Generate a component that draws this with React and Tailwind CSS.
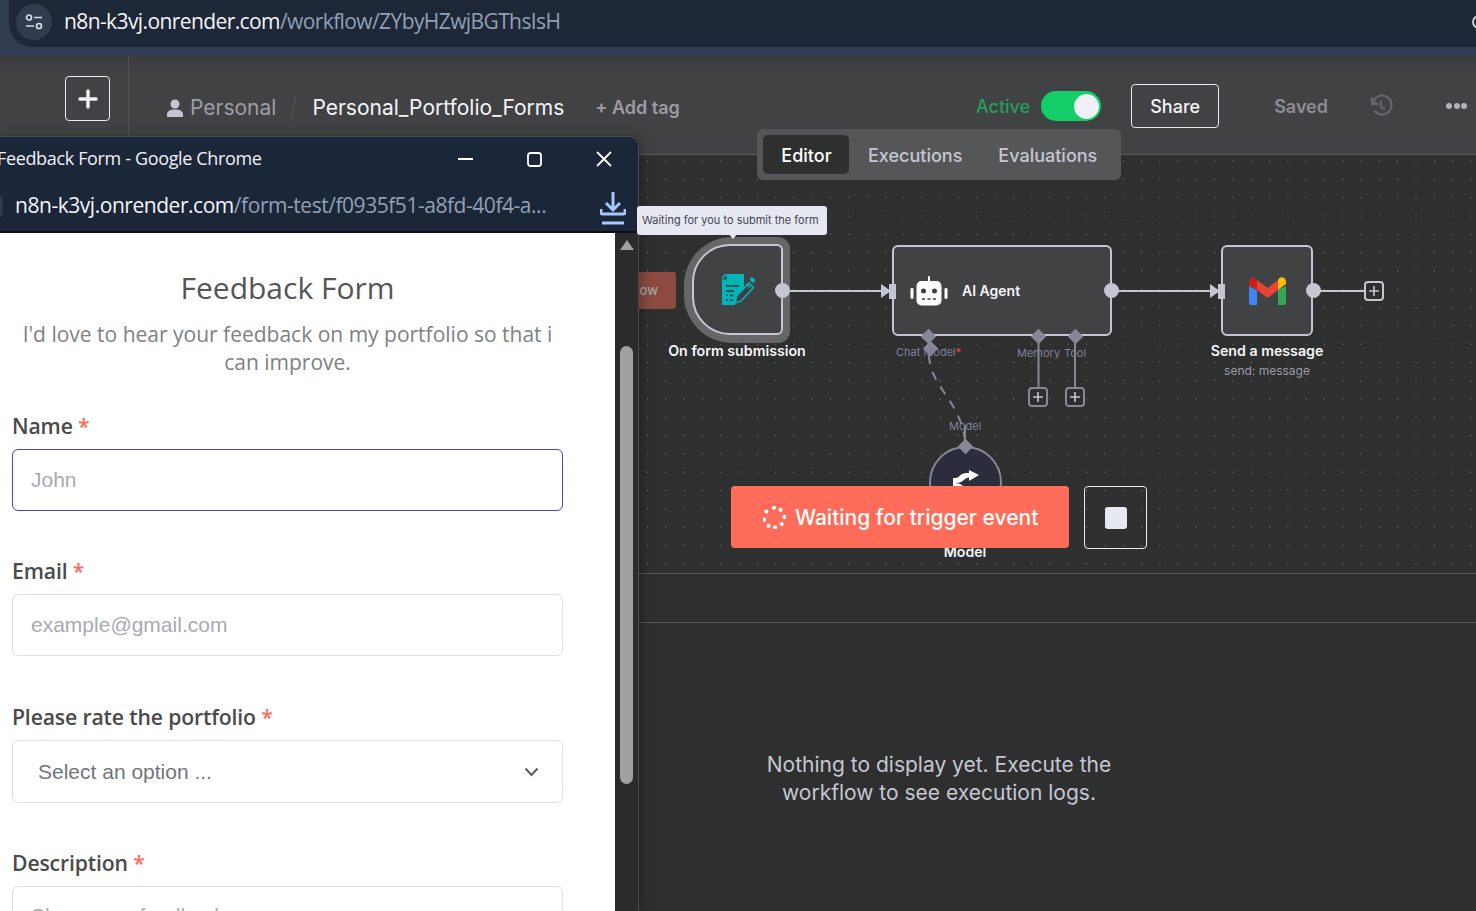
import React from "react";

const inter = "font-['Inter',sans-serif]";

function FormIcon() {
  return (
    <svg width="34" height="32" viewBox="0 0 34 32">
      <path d="M4 0h19v16l-8 9-1 6H1V3z" fill="#00b5b8" />
      <path d="M1 5.500l4.500-4.500v4.500z" fill="#3e3f41" />
      <path d="M5 12h13M5 17h8M5 21.500h2M9 21.500h3M5 26h2M9 26h3" stroke="#35383a" strokeWidth="1.6" />
      <path d="M14 29l1.500-7L28 9l4.500 4.500L20 27z" fill="#3e3f41" stroke="#00b5b8" strokeWidth="1.7" strokeLinejoin="round" />
      <path d="M29.500 5.500l1.500-1.500 2.500 2.500-1.500 1.500zM25.500 10l3.500 3.500" stroke="#00b5b8" strokeWidth="1.6" fill="#00b5b8" />
    </svg>
  );
}

function RobotIcon() {
  return (
    <svg width="38" height="30" viewBox="0 0 38 30">
      <rect x="18" y="0" width="2" height="6" rx="1" fill="#fff" />
      <rect x="6.500" y="5" width="25" height="24.500" rx="5" fill="#fff" />
      <rect x="0.500" y="12" width="3" height="11" rx="1.400" fill="#fff" />
      <rect x="34.500" y="12" width="3" height="11" rx="1.400" fill="#fff" />
      <circle cx="13.500" cy="15" r="2.500" fill="#3e3f41" />
      <circle cx="24.500" cy="15" r="2.500" fill="#3e3f41" />
      <path d="M12 23h3M17.500 23h3M23 23h3" stroke="#3e3f41" strokeWidth="1.6" />
    </svg>
  );
}

function GmailIcon() {
  return (
    <svg width="37" height="28" viewBox="0 0 37 28">
      <path d="M0 9v16.500A2.500 2.500 0 0 0 2.500 28H8V13z" fill="#4285f4" />
      <path d="M29 13v15h5.500a2.500 2.500 0 0 0 2.500-2.500V9z" fill="#34a853" />
      <path d="M29 3v10l8-6V4.500C37 1 33-1 30.500 1z" fill="#fbbc04" />
      <path d="M8 13V3l10.500 8L29 3v10l-10.500 8z" fill="#ea4335" />
      <path d="M0 4.500V9l8 4V3L6.500 1.500C4-1 0 1 0 4.500z" fill="#c5221f" />
    </svg>
  );
}

function Plus({ className }) {
  return (
    <div className={`absolute w-[20px] h-[20px] rounded-[4px] border-2 border-[#868898] flex items-center justify-center bg-[#2e2f2f] ${className}`}>
      <svg width="12" height="12" viewBox="0 0 12 12"><path d="M6 1v10M1 6h10" stroke="#c4c7d2" strokeWidth="1.6" /></svg>
    </div>
  );
}

function Diamond({ className }) {
  return <div className={`absolute w-[11px] h-[11px] rotate-45 bg-[#868898] ${className}`} />;
}

function Label({ children, className }) {
  return <div className={`text-[21.2px] leading-[28px] text-[#4a4a4a] font-semibold tracking-[-0.15px] ${className}`}>{children} <span className="text-[#ff6d5a]">*</span></div>;
}

function Spinner() {
  const pts = [[10,1.500],[16,3.500],[19.500,10],[17,16.500],[11,19.500],[5,18],[1,12.500],[3,5]];
  return (
    <svg width="23" height="23" viewBox="0 0 21 21">
      {pts.map(([x, y], i) => <circle key={i} cx={x} cy={y} r="1.900" fill="#fff" />)}
    </svg>
  );
}

export default function App() {
  return (
    <div className={`relative w-[1476px] h-[911px] overflow-hidden flex flex-col bg-[#2e2f2f] ${inter}`}>
      {/* Browser URL bar */}
      <div className="h-[56px] bg-[#313c50] shrink-0 pl-[9px] relative overflow-hidden">
        <div className="h-[47px] rounded-bl-[24px] bg-[#1e2738] flex items-center pl-[7px] gap-[12px]">
          <div className="w-[36px] h-[36px] rounded-full bg-[#323c4e] flex items-center justify-center -mt-[4px]">
            <svg width="22" height="20" viewBox="0 0 22 20" fill="none" stroke="#d5dbe6" strokeWidth="1.7">
              <circle cx="6" cy="5.500" r="2.500" /><path d="M11 5.500h8M3 14h8" /><circle cx="16" cy="14" r="2.500" />
            </svg>
          </div>
          <div className="font-['Open_Sans',sans-serif] text-[21px] tracking-[-0.6px] -mt-[4px] text-[#93a0b4]"><span className="text-[#f3f5f8]">n8n-k3vj.onrender.com</span>/workflow/ZYbyHZwjBGThsIsH</div>
        </div>
        <div className="absolute left-[1472px] top-[15px] w-[14px] h-[14px] rounded-full border-2 border-[#c9ccd3]" />
      </div>

      {/* n8n header */}
      <div className="h-[99px] shrink-0 bg-[linear-gradient(#3a3b3d,#414244_12px)] border-b border-[#58595b] flex items-center relative">
        <div className="w-[129px] h-[80px] self-start border-r border-[#505153] shrink-0 pl-[65px] pt-[20px]">
          <div className="w-[45px] h-[45px] rounded-[4px] border border-[#e8eaef] flex items-center justify-center">
            <svg width="20" height="20" viewBox="0 0 20 20"><path d="M10 2v16M2 10h16" stroke="#f1f2f5" strokeWidth="3.400" strokeLinecap="round" /></svg>
          </div>
        </div>
        <div className="flex items-center pl-[38px] mt-[5px]">
          <svg width="16" height="18" viewBox="0 0 16 18" fill="#c4c7d2"><circle cx="8" cy="5" r="4.500" /><path d="M0 18v-2.500C0 12 3 10.500 8 10.500s8 1.500 8 5V18z" /></svg>
          <span className="ml-[7px] text-[21px] text-[#9c9ea6]">Personal</span>
          <span className="ml-[17px] mr-[18px] w-[1px] h-[26px] bg-[#56575a] rotate-[12deg]" />
          <span className="text-[21px] text-[#f4f5f7]">Personal_Portfolio_Forms</span>
          <span className="ml-[31px] text-[18px] font-semibold text-[#9a9ca4] -mt-[1px]">+ Add tag</span>
        </div>
        <div className="flex-1" />
        <div className="flex items-center mt-[2px]">
          <span className="text-[18px] font-medium text-[#2a9d5c] mr-[11px]">Active</span>
          <div className="w-[60px] h-[30px] rounded-full bg-[#13ce66] flex items-center justify-end pr-[2px]">
            <div className="w-[25px] h-[25px] rounded-full bg-[#eef0f6]" />
          </div>
          <div className="ml-[30px] w-[88px] h-[44px] rounded-[4px] border border-[#e8eaef] flex items-center justify-center text-[18px] font-medium text-[#f4f5f7]">Share</div>
          <span className="ml-[55px] text-[18px] font-semibold text-[#8c8e96]">Saved</span>
          <svg className="ml-[41px]" width="24" height="24" viewBox="0 0 24 24" fill="none" stroke="#66676b" strokeWidth="2.200" strokeLinecap="round" strokeLinejoin="round">
            <path d="M3 4v6h6" fill="#66676b" /><path d="M3.500 10A9.500 9.500 0 1 1 6 17.500" /><path d="M12 7v6l3.500 2" />
          </svg>
          <div className="ml-[53px] mr-[9px] flex gap-[1.5px]">
            <span className="w-[6px] h-[6px] rounded-full bg-[#b0b2ba]" /><span className="w-[6px] h-[6px] rounded-full bg-[#b0b2ba]" /><span className="w-[6px] h-[6px] rounded-full bg-[#b0b2ba]" />
          </div>
        </div>
        {/* Tabs */}
        <div className="absolute left-[757px] top-[73px] w-[364px] h-[51px] z-10 bg-[#555658] rounded-[6px] p-[6px] flex items-center text-[18px] font-medium text-[#c4c7d2]">
          <div className="w-[86px] h-[39px] rounded-[5px] bg-[#2e2f2f] text-white flex items-center justify-center pl-[1px] pt-[2px]">Editor</div>
          <div className="ml-[19px] pt-[2px]">Executions</div>
          <div className="ml-[36px] pt-[2px]">Evaluations</div>
        </div>
      </div>

      {/* Canvas */}
      <div className="h-[419px] shrink-0 relative bg-[#2e2f2f] bg-[radial-gradient(circle,#8a8b8d_0.7px,transparent_0.9px)] bg-[length:18.3px_18.3px] bg-[position:-2px_-3px] border-b border-[#58595b]">
        {/* Connection lines */}
        <svg className="absolute left-0 top-0" width="1476" height="418" fill="none">
          <path d="M783 136H887" stroke="#c4c7d2" strokeWidth="2" />
          <path d="M881 129l10 7-10 7z" fill="#c4c7d2" />
          <path d="M1111 136H1215" stroke="#c4c7d2" strokeWidth="2" />
          <path d="M1210 129l10 7-10 7z" fill="#c4c7d2" />
          <path d="M1314 136H1366" stroke="#c4c7d2" strokeWidth="2" />
          <path d="M1038.500 186V233M1075 186V233" stroke="#868898" strokeWidth="2" />
          <path d="M929 200C930 232 960 245 965 285" stroke="#868898" strokeWidth="2" strokeDasharray="9 8" />
          <path d="M965 270V290" stroke="#868898" strokeWidth="2" />
        </svg>

        {/* Stop executed pill behind window */}
        <div className="absolute left-[620px] top-[117px] w-[56px] h-[37px] rounded-[3px] bg-[#8c4a40] flex items-center justify-end pr-[18px] text-[13px] text-[#a5a5a5] font-medium">ow</div>

        {/* Trigger node */}
        <div className="absolute left-[684px] top-[82px] w-[106px] h-[106px] rounded-l-[48px] rounded-r-[12px] bg-[#666666] flex items-center pl-[8px]">
          <div className="w-[91px] h-[91px] rounded-l-[38px] rounded-r-[6px] bg-[#414244] border-2 border-[#c4c7d2] flex items-center justify-center -mt-[1px]">
            <FormIcon />
          </div>
        </div>
        <div className="absolute left-[775px] top-[128px] w-[15px] h-[15px] rounded-full bg-[#c4c7d2]" />
        <div className="absolute left-[637px] top-[187px] w-[200px] text-center text-[14.2px] leading-[17px] font-semibold text-[#f4f5f7]">On form submission</div>

        {/* Tooltip */}
        <div className="absolute left-[637px] top-[51px] w-[190px] h-[29px] rounded-[3px] bg-[#e6e9f2] flex items-center pl-[5px] text-[11px] text-[#444652] z-[5]">Waiting for you to submit the form</div>
        <div className="absolute left-[728px] top-[78px] w-0 h-0 border-l-[5px] border-r-[5px] border-t-[6px] border-l-transparent border-r-transparent border-t-[#e6e9f2] z-[5]" />

        {/* AI Agent */}
        <div className="absolute left-[892px] top-[90px] w-[220px] h-[91px] rounded-[6px] bg-[#414244] border-2 border-[#c4c7d2] flex items-center pl-[16px] gap-[14px]">
          <RobotIcon />
          <span className="text-[14px] font-semibold text-[#f4f5f7]">AI Agent</span>
        </div>
        <div className="absolute left-[889px] top-[129px] w-[7px] h-[15px] bg-[#c4c7d2]" />
        <div className="absolute left-[1104px] top-[128px] w-[15px] h-[15px] rounded-full bg-[#c4c7d2]" />
        <Diamond className="left-[923px] top-[175.5px]" />
        <Diamond className="left-[1033px] top-[175.5px]" />
        <Diamond className="left-[1070px] top-[175.5px]" />
        <Diamond className="left-[923px] top-[188px] w-[8px] h-[8px] ml-[1.5px]" />
        <div className="absolute left-[896px] top-[190px] text-[11px] leading-[14px] text-[#7f829a]">Chat Model<span className="text-[#f0484e]">*</span></div>
        <div className="absolute left-[1017px] top-[190.5px] text-[11px] leading-[14px] text-[#7f829a]">Memory</div>
        <div className="absolute left-[1064px] top-[190.5px] text-[11px] leading-[14px] text-[#7f829a]">Tool</div>
        <Plus className="left-[1028px] top-[232px]" />
        <Plus className="left-[1065px] top-[232px]" />
        <div className="absolute left-[949px] top-[264px] text-[11px] leading-[14px] text-[#7f829a]">Model</div>

        {/* Model sub-node */}
        <div className="absolute left-[929px] top-[291px] w-[73px] h-[73px] rounded-full bg-[#2b2d3c] border-2 border-[#868898] flex justify-center pt-[22px]">
          <svg width="28" height="22" viewBox="0 0 28 22" fill="#fff">
            <path d="M17 0l10 5-10 6V7.500c-4 .5-5 3-7 4s-4 1.500-9 1.500V8c4 0 5-.5 7-2.500S13 3 17 3z" />
            <path d="M1 13c6 0 8 1 10 3h6v6H9c-2-2-4-3-8-3z" />
          </svg>
        </div>
        <Diamond className="left-[960px] top-[286px]" />
        <div className="absolute left-[865px] top-[388px] w-[200px] text-center text-[14.2px] leading-[17px] font-semibold text-[#f4f5f7]">Model</div>

        {/* Send a message */}
        <div className="absolute left-[1221px] top-[90px] w-[92px] h-[91px] rounded-[6px] bg-[#414244] border-2 border-[#c4c7d2] flex items-center justify-center">
          <GmailIcon />
        </div>
        <div className="absolute left-[1218px] top-[129px] w-[7px] h-[15px] bg-[#c4c7d2]" />
        <div className="absolute left-[1306px] top-[128px] w-[15px] h-[15px] rounded-full bg-[#c4c7d2]" />
        <Plus className="left-[1364px] top-[125.5px] border-[#c4c7d2]" />
        <div className="absolute left-[1167px] top-[187px] w-[200px] text-center text-[14.2px] leading-[17px] font-semibold text-[#f4f5f7]">Send a message</div>
        <div className="absolute left-[1167px] top-[208px] w-[200px] text-center text-[12px] leading-[15px] text-[#9a9ca4]">send: message</div>

        {/* Execute bar */}
        <div className="absolute left-[731px] top-[331px] w-[338px] h-[62px] rounded-[4px] bg-[#ff6d5a] flex items-center pl-[32px] gap-[9px] text-[21px] font-medium text-white">
          <Spinner />
          <span className="pt-[2px]">Waiting for trigger event</span>
        </div>
        <div className="absolute left-[1084px] top-[331px] w-[63px] h-[63px] rounded-[4px] border border-[#e8eaef] flex items-center justify-center">
          <div className="w-[22px] h-[22px] rounded-[3px] bg-[#e6e9f2]" />
        </div>
      </div>

      {/* Logs */}
      <div className="h-[49px] shrink-0 border-b border-[#58595b]" />
      <div className="flex-1 flex justify-center pl-[402px] pt-[128px]">
        <div className="w-[400px] text-center text-[21px] leading-[28px] text-[#c4c7d2] font-normal">
          Nothing to display yet. Execute the workflow to see execution logs.
        </div>
      </div>

      {/* Popup window */}
      <div className="absolute left-0 top-[136px] w-[639px] h-[775px] flex flex-col bg-[#2b2b2b] border-r border-t border-[#4a4b4d] rounded-tr-[10px] overflow-hidden shadow-[4px_0_10px_rgba(0,0,0,0.25)]">
        <div className="h-[44px] shrink-0 bg-[#1c2639] flex items-center font-['Open_Sans',sans-serif]">
          <span className="-mt-[2px] text-[18px] tracking-[-0.35px] text-[#eef1f5] whitespace-nowrap -ml-[3px]">Feedback Form - Google Chrome</span>
          <div className="flex-1" />
          <svg className="mr-[54px]" width="15" height="2" viewBox="0 0 15 2"><path d="M0 1h15" stroke="#fff" strokeWidth="2" /></svg>
          <svg className="mr-[54px]" width="15" height="15" viewBox="0 0 15 15"><rect x="1" y="1" width="13" height="13" rx="2.500" fill="none" stroke="#fff" strokeWidth="1.800" /></svg>
          <svg className="mr-[26px]" width="16" height="16" viewBox="0 0 16 16"><path d="M1 1l14 14M15 1L1 15" stroke="#fff" strokeWidth="1.800" /></svg>
        </div>
        <div className="h-[52px] shrink-0 bg-[#1c2639] border-b-2 border-[#0c0f14] flex items-center relative font-['Open_Sans',sans-serif]">
          <div className="absolute -left-[15px] top-[11px] w-[18px] h-[28px] rounded-full bg-[#2f3a4c]" />
          <span className="ml-[15px] -mt-[1px] text-[21px] tracking-[-0.46px] text-[#93a0b4] whitespace-nowrap"><span className="text-[#f3f5f8]">n8n-k3vj.onrender.com</span>/form-test/f0935f51-a8fd-40f4-a...</span>
          <svg className="absolute left-[600px] top-[11px]" width="26" height="33" viewBox="0 0 26 33" fill="none" stroke="#a8c7fa" strokeWidth="3">
            <path d="M13 0v17M6 11l7 7 7-7M1 17v3.500a1.500 1.500 0 0 0 1.500 1.500h21a1.500 1.500 0 0 0 1.500-1.500V17M2 31h22" />
          </svg>
        </div>
        <div className="flex-1 flex min-h-0">
          {/* Form content */}
          <div className="w-[615px] shrink-0 bg-white px-[12px] font-['Open_Sans',sans-serif] overflow-hidden">
            <div className="w-[551px]">
              <div className="pt-[35px] text-center text-[30px] leading-[40px] text-[#555]">Feedback Form</div>
              <div className="mt-[12px] text-center text-[21px] leading-[28px] text-[#7e8186]">I'd love to hear your feedback on my portfolio so that i can improve.</div>
              <Label className="mt-[36px]">Name</Label>
              <div className="mt-[9px] h-[62px] rounded-[6px] border border-[#5a3fc0] flex items-center pl-[18px] text-[21px] text-[#a8aab0] font-['Liberation_Sans',sans-serif]">John</div>
              <Label className="mt-[46px]">Email</Label>
              <div className="mt-[9px] h-[62px] rounded-[6px] border border-[#dbdfe7] flex items-center pl-[18px] text-[21px] text-[#a8aab0] font-['Liberation_Sans',sans-serif]">example@gmail.com</div>
              <Label className="mt-[47px]">Please rate the portfolio</Label>
              <div className="mt-[9px] h-[63px] rounded-[6px] border border-[#dbdfe7] flex items-center pl-[25px] pr-[23px] justify-between text-[21px] text-[#71747a] font-['Liberation_Sans',sans-serif]">
                <span>Select an option ...</span>
                <svg width="15" height="10" viewBox="0 0 15 10" fill="none" stroke="#5a5c62" strokeWidth="2"><path d="M1.500 1.500L7.500 8l6-6.500" /></svg>
              </div>
              <Label className="mt-[46px]">Description</Label>
              <div className="mt-[9px] h-[62px] rounded-t-[6px] border border-[#dbdfe7] pl-[18px] pt-[13px] text-[21px] text-[#a8aab0] font-['Liberation_Sans',sans-serif]">Share your feedback</div>
            </div>
          </div>
          {/* Scrollbar */}
          <div className="flex-1 bg-[#2b2b2b] relative">
            <div className="absolute left-[5px] top-[7px] w-0 h-0 border-l-[7px] border-r-[7px] border-b-[10px] border-l-transparent border-r-transparent border-b-[#a0a0a0]" />
            <div className="absolute left-[5px] top-[113px] w-[13px] h-[438px] rounded-full bg-[#a0a0a0]" />
          </div>
        </div>
      </div>
    </div>
  );
}
